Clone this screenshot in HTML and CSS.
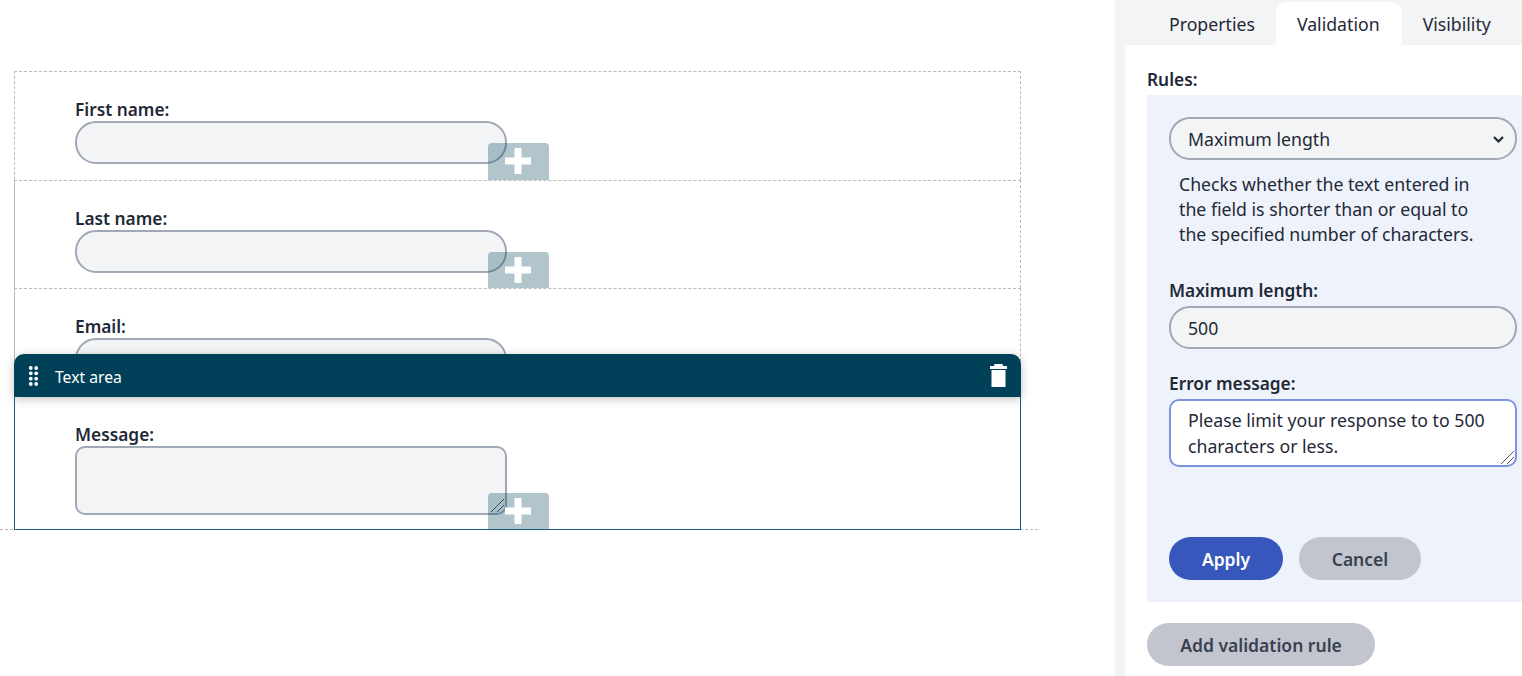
FILE: index.html
```html
<!DOCTYPE html>
<html lang="en">
<head>
    <meta charset="UTF-8">
    <meta name="viewport" content="width=device-width, initial-scale=1.0">
    <title>Form builder</title>
    <link rel="stylesheet" href="styles.css">
</head>
<body>
    <main class="canvas">
        <div class="form-area">
            <div class="row row-first">
                <label class="field-label">First name:</label>
                <input type="text" class="field-input">
                <button class="add-btn" type="button">
                    <svg viewBox="0 0 26 26" width="26" height="26"><path d="M9.500 0h7v9.500h9.500v7h-9.500v9.500h-7v-9.500h-9.500v-7h9.500z" fill="#fff"/></svg>
                </button>
            </div>
            <div class="row">
                <label class="field-label">Last name:</label>
                <input type="text" class="field-input">
                <button class="add-btn" type="button">
                    <svg viewBox="0 0 26 26" width="26" height="26"><path d="M9.500 0h7v9.500h9.500v7h-9.500v9.500h-7v-9.500h-9.500v-7h9.500z" fill="#fff"/></svg>
                </button>
            </div>
            <div class="row">
                <label class="field-label">Email:</label>
                <input type="text" class="field-input">
            </div>
            <div class="row row-selected">
                <div class="row-header">
                    <svg class="drag-icon" viewBox="0 0 10 20" width="10" height="20" fill="#fff">
                        <circle cx="1.800" cy="2" r="1.900"/><circle cx="7.200" cy="2" r="1.900"/>
                        <circle cx="1.800" cy="7.300" r="1.900"/><circle cx="7.200" cy="7.300" r="1.900"/>
                        <circle cx="1.800" cy="12.700" r="1.900"/><circle cx="7.200" cy="12.700" r="1.900"/>
                        <circle cx="1.800" cy="18" r="1.900"/><circle cx="7.200" cy="18" r="1.900"/>
                    </svg>
                    <span class="row-title">Text area</span>
                    <svg class="trash-icon" viewBox="0 0 17 23" width="17" height="23" fill="#fff">
                        <path d="M4.500 0h8l.5 2h4v3h-17v-3h4z"/>
                        <path d="M1.500 6h14v17h-14z"/>
                    </svg>
                </div>
                <label class="field-label">Message:</label>
                <div class="textarea-wrap">
                    <textarea class="field-input field-textarea"></textarea>
                    <svg class="grip" viewBox="0 0 13 13" width="13" height="13"><path d="M0 13L13 0M6 13L13 6" stroke="#555" stroke-width="1" fill="none"/></svg>
                </div>
                <button class="add-btn" type="button">
                    <svg viewBox="0 0 26 26" width="26" height="26"><path d="M9.500 0h7v9.500h9.500v7h-9.500v9.500h-7v-9.500h-9.500v-7h9.500z" fill="#fff"/></svg>
                </button>
            </div>
        </div>
    </main>

    <aside class="sidebar">
        <div class="tabs">
            <div class="tab">Properties</div>
            <div class="tab tab-active">Validation</div>
            <div class="tab">Visibility</div>
        </div>
        <div class="panel">
            <div class="rules-label">Rules:</div>
            <div class="rule-box">
                <div class="select-wrap">
                    <select class="side-input side-select">
                        <option>Maximum length</option>
                    </select>
                    <svg class="chevron" viewBox="0 0 11 7" width="11" height="7"><path d="M1 1l4.500 4.500L10 1" stroke="#1f2937" stroke-width="2.200" fill="none"/></svg>
                </div>
                <p class="rule-help">Checks whether the text entered in the field is shorter than or equal to the specified number of characters.</p>

                <label class="side-label">Maximum length:</label>
                <input type="text" class="side-input" value="500">

                <label class="side-label side-label-error">Error message:</label>
                <div class="textarea-wrap">
                    <textarea class="side-input side-textarea">Please limit your response to to 500 characters or less.</textarea>
                    <svg class="grip" viewBox="0 0 13 13" width="13" height="13"><path d="M0 13L13 0M6 13L13 6" stroke="#555" stroke-width="1" fill="none"/></svg>
                </div>

                <div class="rule-actions">
                    <button class="btn btn-primary" type="button">Apply</button>
                    <button class="btn btn-cancel" type="button">Cancel</button>
                </div>
            </div>
            <button class="btn btn-add" type="button">Add validation rule</button>
        </div>
    </aside>
</body>
</html>
```

FILE: styles.css
```css
* {
    box-sizing: border-box;
}

html, body {
    height: 100%;
}

body {
    display: flex;
    margin: 0;
    overflow: hidden;
    background-color: #ffffff;
    color: #1f2937;
    font-family: "Noto Sans", "Open Sans", sans-serif;
}

.canvas {
    width: 1115px;
    flex-shrink: 0;
    padding-top: 71px;
}

.form-area {
    width: 1038px;
    padding-left: 14px;
    padding-right: 17px;
    border-bottom: 1px dashed #bbbbbb;
}

.row {
    position: relative;
    display: flex;
    flex-direction: column;
    align-items: flex-start;
    height: 108.5px;
    padding: 27px 0 0 60px;
    border-top: 1px dashed #bbbbbb;
    border-left: 1px solid #bbbbbb;
    border-right: 1px dashed #bbbbbb;
}

.row-first {
    border-left-style: dashed;
}

.row-selected {
    height: 133.5px;
    border: 1px solid #1a5f8a;
    border-top: none;
    margin-bottom: -1px;
    padding-top: 27.5px;
}

.field-label {
    font-size: 17.3px;
    font-weight: 600;
    line-height: 22px;
    color: #1f2937;
}

.field-input {
    display: block;
    width: 432px;
    height: 43px;
    margin: 0;
    background-color: #f3f4f6;
    border: 2px solid #a0a7b5;
    border-radius: 21px;
    outline: none;
}

.textarea-wrap {
    position: relative;
}

.field-textarea {
    height: 69px;
    border-radius: 10px;
    resize: none;
}

.grip {
    position: absolute;
    right: 3px;
    bottom: 3px;
}

.add-btn {
    position: absolute;
    right: 471.5px;
    bottom: 0;
    display: flex;
    align-items: center;
    justify-content: center;
    width: 61px;
    height: 36.5px;
    padding: 0;
    background-color: rgba(0, 64, 88, 0.3);
    border: none;
    border-radius: 4px 4px 0 0;
}

.row-header {
    position: absolute;
    left: -1px;
    right: -1px;
    top: -42.5px;
    display: flex;
    align-items: center;
    height: 43px;
    padding: 0 14px 0 15px;
    background-color: #004058;
    border-radius: 10px 10px 0 0;
    box-shadow: 0 2px 10px rgba(0, 0, 0, 0.25);
    color: #ffffff;
}

.row-title {
    flex: 1;
    margin-left: 16px;
    padding-top: 2px;
    font-size: 15.7px;
}

.sidebar {
    flex: 1;
    min-width: 0;
    padding-left: 10px;
    background-color: #f3f4f6;
}

.tabs {
    display: flex;
    height: 45px;
    padding: 2px 0 0 23px;
}

.tab {
    padding: 0 21px;
    font-size: 17.7px;
    line-height: 44px;
    color: #1f2937;
}

.tab-active {
    padding-right: 22px;
    background-color: #ffffff;
    border-radius: 10px 10px 0 0;
}

.panel {
    height: 631px;
    padding: 19px 0 0 22px;
    background-color: #ffffff;
}

.rules-label {
    font-size: 17.3px;
    font-weight: 600;
    line-height: 31px;
}

.rule-box {
    height: 507px;
    padding: 22px 5px 0 22px;
    background-color: #eef2fb;
}

.side-input {
    display: block;
    width: 100%;
    height: 43px;
    margin: 0;
    padding: 0 17px;
    background-color: #f3f4f6;
    border: 2px solid #a0a7b5;
    border-radius: 21px;
    color: #1f2937;
    font-family: inherit;
    font-size: 17.7px;
    outline: none;
}

.select-wrap {
    position: relative;
}

.side-select {
    appearance: none;
}

.chevron {
    position: absolute;
    right: 13px;
    top: 19px;
}

.rule-help {
    margin: 12px 30px 0 10px;
    font-size: 17.7px;
    line-height: 25px;
}

.side-label {
    display: block;
    margin-top: 32px;
    margin-bottom: 3px;
    font-size: 17.3px;
    font-weight: 600;
    line-height: 24px;
}

.side-label-error {
    margin-top: 23px;
}

.side-textarea {
    display: block;
    height: 68px;
    padding: 6px 17px;
    background-color: #ffffff;
    border-color: #7c93e3;
    border-radius: 10px;
    line-height: 26px;
    resize: none;
}

.rule-actions {
    display: flex;
    gap: 16px;
    margin-top: 70px;
}

.btn {
    height: 43px;
    border: none;
    border-radius: 22px;
    font-family: inherit;
    font-size: 17.5px;
    font-weight: 600;
}

.btn-primary {
    width: 114px;
    background-color: #3757bd;
    color: #ffffff;
}

.btn-cancel {
    width: 122px;
    background-color: #c2c5ce;
    color: #374151;
}

.btn-add {
    width: 228px;
    margin-top: 21px;
    background-color: #c2c5ce;
    color: #374151;
}
```
